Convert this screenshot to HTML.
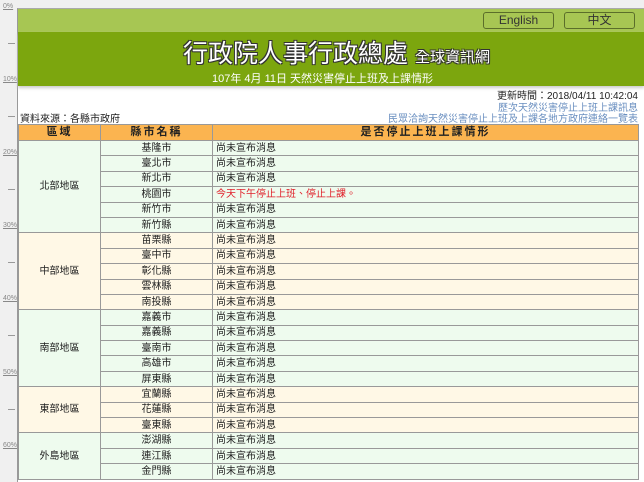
<!DOCTYPE html>
<html><head><meta charset="utf-8">
<style>
*{margin:0;padding:0;box-sizing:border-box}
body{width:644px;height:482px;background:#f0f0f0;font-family:"Liberation Sans","Noto Sans CJK TC",sans-serif;position:relative;overflow:hidden;font-size:11px;color:#222}
.rl{position:absolute;left:3px;font-size:7px;color:#888;text-decoration:underline}
.dash{position:absolute;left:8px;width:7px;height:1px;background:#999}
#frame{position:absolute;left:17px;top:8px;width:627px;height:474px;background:#fff;border-left:1px solid #999;border-top:1px solid #aaa}
#top{position:absolute;left:18px;top:9px;width:626px;height:23px;background:#a7c653}
#mid{position:absolute;left:18px;top:32px;width:626px;height:54px;background:#7ca60e;box-shadow:0 2px 3px #ccc}
.btn{position:absolute;top:12px;height:17px;border:1px solid #5b6e2a;border-radius:3px;background:#a7c653;color:#333;font-size:12px;text-align:center;line-height:15px}
#title{position:absolute;left:183px;top:34px;color:#fff;font-size:25px;text-shadow:1px 1px 0 #333,-1px -1px 0 #333,1px -1px 0 #333,-1px 1px 0 #333;white-space:nowrap}
#title small{font-size:15px}
#sub{position:absolute;left:212px;top:70px;color:#fff;font-size:11px;white-space:nowrap}
.r{position:absolute;right:6px;font-size:10px;white-space:nowrap}
table{position:absolute;left:18px;top:124px;width:621px;border-collapse:collapse;table-layout:fixed}
td,th{border:1px solid #999;font-size:10px;height:15.4px;padding:0;line-height:13px;font-weight:normal}
th{background:#fbb450;height:16px;font-weight:bold;letter-spacing:2px;font-size:11px}
td.c{text-align:center}
td.s{padding-left:3px}
.g td{background:#eefbee}
.y td{background:#fff8e6}
.red{color:#e0202a}
</style></head><body>
<span class="rl" style="top:3px">0%</span>
<span class="dash" style="top:43px"></span>
<span class="rl" style="top:76px">10%</span>
<span class="dash" style="top:116px"></span>
<span class="rl" style="top:149px">20%</span>
<span class="dash" style="top:189px"></span>
<span class="rl" style="top:222px">30%</span>
<span class="dash" style="top:262px"></span>
<span class="rl" style="top:295px">40%</span>
<span class="dash" style="top:335px"></span>
<span class="rl" style="top:369px">50%</span>
<span class="dash" style="top:409px"></span>
<span class="rl" style="top:442px">60%</span>
<div id="frame"></div>
<div id="top"></div>
<div id="mid"></div>
<div class="btn" style="left:483px;width:71px">English</div>
<div class="btn" style="left:564px;width:71px">中文</div>
<div id="title">行政院人事行政總處 <small>全球資訊網</small></div>
<div id="sub">107年 4月 11日 天然災害停止上班及上課情形</div>
<div class="r" style="top:87px;color:#222">更新時間：2018/04/11 10:42:04</div>
<div class="r" style="top:99px;color:#6a8fc0">歷次天然災害停止上班上課訊息</div>
<div class="r" style="top:110px;color:#6a8fc0">民眾洽詢天然災害停止上班及上課各地方政府連絡一覽表</div>
<div style="position:absolute;left:20px;top:110px;font-size:10px">資料來源：各縣市政府</div>
<table>
<colgroup><col style="width:82px"><col style="width:112px"><col></colgroup>
<tr><th>區域</th><th>縣市名稱</th><th>是否停止上班上課情形</th></tr>
<tr class="g"><td class="c" rowspan="6">北部地區</td><td class="c">基隆市</td><td class="s">尚未宣布消息</td></tr>
<tr class="g"><td class="c">臺北市</td><td class="s">尚未宣布消息</td></tr>
<tr class="g"><td class="c">新北市</td><td class="s">尚未宣布消息</td></tr>
<tr class="g"><td class="c">桃園市</td><td class="s red">今天下午停止上班、停止上課。</td></tr>
<tr class="g"><td class="c">新竹市</td><td class="s">尚未宣布消息</td></tr>
<tr class="g"><td class="c">新竹縣</td><td class="s">尚未宣布消息</td></tr>
<tr class="y"><td class="c" rowspan="5">中部地區</td><td class="c">苗栗縣</td><td class="s">尚未宣布消息</td></tr>
<tr class="y"><td class="c">臺中市</td><td class="s">尚未宣布消息</td></tr>
<tr class="y"><td class="c">彰化縣</td><td class="s">尚未宣布消息</td></tr>
<tr class="y"><td class="c">雲林縣</td><td class="s">尚未宣布消息</td></tr>
<tr class="y"><td class="c">南投縣</td><td class="s">尚未宣布消息</td></tr>
<tr class="g"><td class="c" rowspan="5">南部地區</td><td class="c">嘉義市</td><td class="s">尚未宣布消息</td></tr>
<tr class="g"><td class="c">嘉義縣</td><td class="s">尚未宣布消息</td></tr>
<tr class="g"><td class="c">臺南市</td><td class="s">尚未宣布消息</td></tr>
<tr class="g"><td class="c">高雄市</td><td class="s">尚未宣布消息</td></tr>
<tr class="g"><td class="c">屏東縣</td><td class="s">尚未宣布消息</td></tr>
<tr class="y"><td class="c" rowspan="3">東部地區</td><td class="c">宜蘭縣</td><td class="s">尚未宣布消息</td></tr>
<tr class="y"><td class="c">花蓮縣</td><td class="s">尚未宣布消息</td></tr>
<tr class="y"><td class="c">臺東縣</td><td class="s">尚未宣布消息</td></tr>
<tr class="g"><td class="c" rowspan="3">外島地區</td><td class="c">澎湖縣</td><td class="s">尚未宣布消息</td></tr>
<tr class="g"><td class="c">連江縣</td><td class="s">尚未宣布消息</td></tr>
<tr class="g"><td class="c">金門縣</td><td class="s">尚未宣布消息</td></tr>
</table>
</body></html>
